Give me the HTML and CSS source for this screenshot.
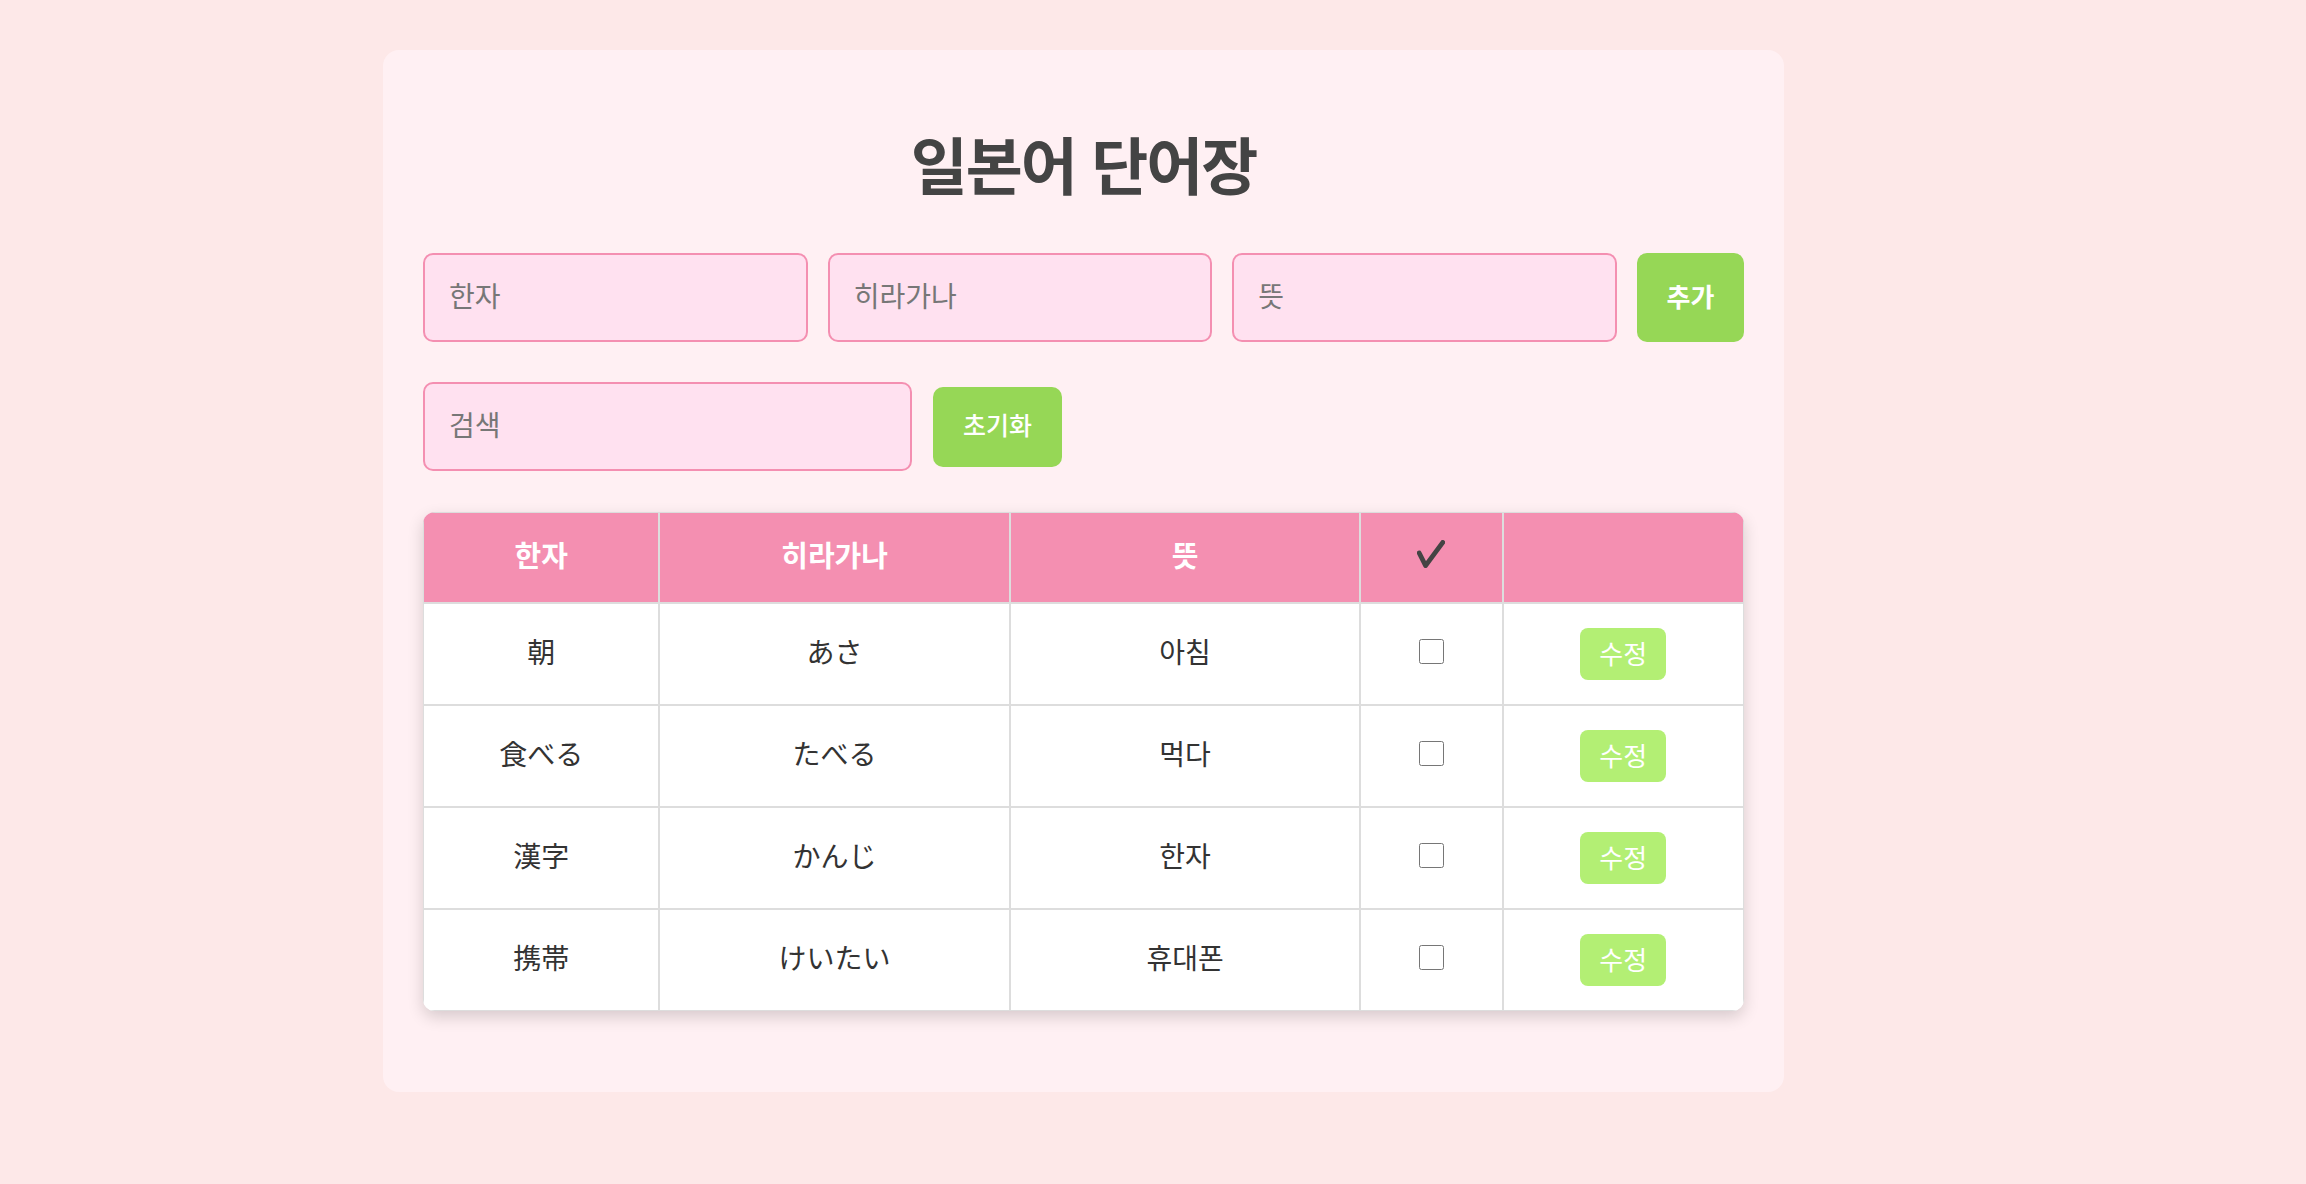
FILE: index.html
```html
<!DOCTYPE html>
<html lang="ko">
<head>
<meta charset="utf-8">
<title>일본어 단어장</title>
<link rel="stylesheet" href="styles.css">
</head>
<body>
<div class="card">
  <h1 class="title">일본어 단어장</h1>
  <div class="add-row">
    <input class="field" type="text" placeholder="한자">
    <input class="field" type="text" placeholder="히라가나">
    <input class="field" type="text" placeholder="뜻">
    <button class="btn-add">추가</button>
  </div>
  <div class="search-row">
    <input class="field search" type="text" placeholder="검색">
    <button class="btn-reset">초기화</button>
  </div>
  <div class="table-wrap">
    <table class="words">
      <colgroup>
        <col class="c1"><col class="c2"><col class="c3"><col class="c4"><col class="c5">
      </colgroup>
      <thead>
        <tr>
          <th>한자</th>
          <th>히라가나</th>
          <th>뜻</th>
          <th><svg class="check" width="28" height="28" viewBox="0 0 28 28"><path d="M2.2 13 L8.6 25.6 L25.8 2.4" fill="none" stroke="#444" stroke-width="4.8" stroke-linecap="round" stroke-linejoin="round"/></svg></th>
          <th></th>
        </tr>
      </thead>
      <tbody>
        <tr><td>朝</td><td>あさ</td><td>아침</td><td><input class="cb" type="checkbox"></td><td><button class="btn-edit">수정</button></td></tr>
        <tr><td>食べる</td><td>たべる</td><td>먹다</td><td><input class="cb" type="checkbox"></td><td><button class="btn-edit">수정</button></td></tr>
        <tr><td>漢字</td><td>かんじ</td><td>한자</td><td><input class="cb" type="checkbox"></td><td><button class="btn-edit">수정</button></td></tr>
        <tr><td>携帯</td><td>けいたい</td><td>휴대폰</td><td><input class="cb" type="checkbox"></td><td><button class="btn-edit">수정</button></td></tr>
      </tbody>
    </table>
  </div>
</div>
</body>
</html>
```
FILE: styles.css
```css
html, body {
  margin: 0;
  padding: 0;
  background: #fde8e8;
  font-family: "Noto Sans CJK KR", "Noto Sans CJK JP", "Noto Sans", sans-serif;
}
.card {
  box-sizing: border-box;
  width: 1401px;
  margin: 50px 0 0 383px;
  padding: 40px 40px 40px;
  background: #fff0f3;
  border-radius: 16px;
}
.title {
  margin: 36px 0 53px;
  font-size: 62px;
  line-height: 74px;
  font-weight: 700;
  color: #444;
  text-align: center;
  letter-spacing: -2px;
}
.add-row {
  display: flex;
  gap: 20px;
  height: 89px;
}
.field {
  box-sizing: border-box;
  flex: 1;
  min-width: 0;
  height: 89px;
  padding: 0 24px 5px;
  border: 2px solid #f48fb1;
  border-radius: 10px;
  background: #ffe1f0;
  font-family: inherit;
  font-size: 28px;
  color: #333;
  outline: none;
}
.field::placeholder {
  color: #777;
}
.btn-add {
  width: 107px;
  border: none;
  border-radius: 10px;
  background: #96d756;
  color: #fff;
  font-family: inherit;
  font-size: 26px;
  font-weight: 700;
  padding: 0 0 5px;
}
.search-row {
  display: flex;
  align-items: center;
  gap: 21px;
  margin-top: 40px;
}
.search {
  flex: none;
  width: 489px;
}
.btn-reset {
  width: 129px;
  height: 80px;
  border: none;
  border-radius: 10px;
  background: #96d756;
  color: #fff;
  font-family: inherit;
  font-size: 25px;
  font-weight: 500;
  padding: 0 0 6px;
}
.table-wrap {
  margin: 41px 0 41px;
  border-radius: 12px;
  overflow: hidden;
  box-shadow: 0 6px 16px rgba(0, 0, 0, 0.16);
  background: #fff;
}
.words {
  width: 100%;
  table-layout: fixed;
  border-collapse: separate;
  border-spacing: 0;
}
.c1 { width: 236px; }
.c2 { width: 350px; }
.c3 { width: 350px; }
.c4 { width: 142px; }
.c5 { width: 241px; }
.words th, .words td {
  box-sizing: border-box;
  border: 1px solid #dddddd;
  padding: 0 0 6px;
  text-align: center;
  vertical-align: middle;
}
.words th {
  height: 91px;
  background: #f48fb1;
  color: #fff;
  font-size: 29px;
  font-weight: 700;
  padding-bottom: 7px;
}
.words td {
  height: 102px;
  background: #fff;
  color: #333;
  font-size: 28px;
}
.check {
  display: block;
  margin: 0 auto;
}
.cb {
  display: block;
  width: 25px;
  height: 25px;
  margin: 0 auto;
}
.btn-edit {
  display: block;
  width: 86px;
  height: 52px;
  margin: 6px auto 0;
  border: none;
  border-radius: 8px;
  background: #b3ef74;
  color: #fff;
  font-family: inherit;
  font-size: 26px;
  padding: 0 0 3px;
}
```
